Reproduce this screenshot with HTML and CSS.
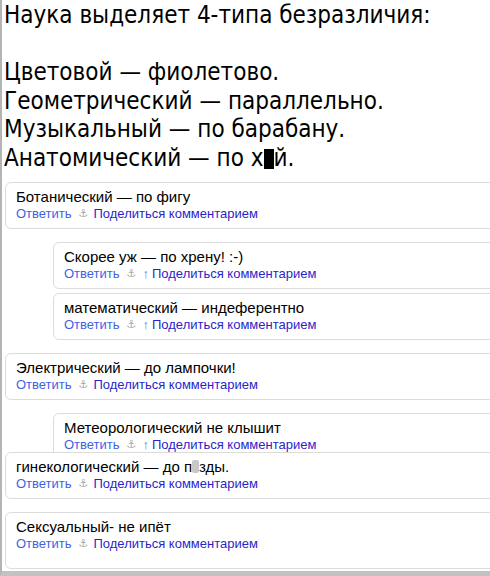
FILE: index.html
```html
<!DOCTYPE html>
<html>
<head>
	<meta charset="utf-8">
	<meta name="viewport" content="width=device-width, initial-scale=1">
	<title>Комментарии</title>
	<link rel="stylesheet" href="styles.css">
</head>
<body>
	<div class="frame">
		<div class="post">
			<p>Наука выделяет 4-типа безразличия:</p>
			<p>&nbsp;</p>
			<p>Цветовой — фиолетово.</p>
			<p>Геометрический — параллельно.</p>
			<p>Музыкальный — по барабану.</p>
			<p>Анатомический — по х<span class="censor">у</span>й.</p>
		</div>

		<div class="comments">
			<div class="comment">
				<div class="text">Ботанический — по фигу</div>
				<div class="links"><a class="reply">Ответить</a><span class="anchor">⚓</span><a class="share">Поделиться комментарием</a></div>
			</div>

			<div class="comment child gap">
				<div class="text">Скорее уж — по хрену! :-)</div>
				<div class="links"><a class="reply">Ответить</a><span class="anchor">⚓</span><span class="up">↑</span><a class="share">Поделиться комментарием</a></div>
			</div>
			<div class="comment child tight">
				<div class="text">математический — индеферентно</div>
				<div class="links"><a class="reply">Ответить</a><span class="anchor">⚓</span><span class="up">↑</span><a class="share">Поделиться комментарием</a></div>
			</div>

			<div class="comment gap">
				<div class="text">Электрический — до лампочки!</div>
				<div class="links"><a class="reply">Ответить</a><span class="anchor">⚓</span><a class="share">Поделиться комментарием</a></div>
			</div>

			<div class="comment child gap">
				<div class="text">Метеорологический не клышит</div>
				<div class="links"><a class="reply">Ответить</a><span class="anchor">⚓</span><span class="up">↑</span><a class="share">Поделиться комментарием</a></div>
			</div>
			<!-- этот блок наезжает на предыдущий -->
			<div class="comment over">
				<div class="text">гинекологический — до п<span class="blur">и</span>зды.</div>
				<div class="links"><a class="reply">Ответить</a><span class="anchor">⚓</span><a class="share">Поделиться комментарием</a></div>
			</div>

			<div class="comment gap last">
				<div class="text">Сексуальный- не ипёт</div>
				<div class="links"><a class="reply">Ответить</a><span class="anchor">⚓</span><a class="share">Поделиться комментарием</a></div>
			</div>
		</div>
	</div>
</body>
</html>
```

FILE: styles.css
```css
* {
	padding: 0;
	margin: 0;
	box-sizing: border-box;
}
body {overflow: hidden; background: #fff;}
.frame {
	height: 576px;
	border-left: 2px solid #b4b4b4;
	border-bottom: 5px solid #c2c2c2;
	overflow: hidden;
}

.post {
	font-family: "DejaVu Sans Condensed", "DejaVu Sans", sans-serif;
	font-size: 24px;
	line-height: 28.5px;
	color: #000;
	padding: 1px 0 0 2px;
}
.censor {
	display: inline-block;
	width: 10px;
	height: 20px;
	overflow: hidden;
	vertical-align: -3px;
	background: #000;
	color: transparent;
	line-height: 20px;
}

.comments {
	display: flex;
	flex-direction: column;
	padding: 10px 0 0 3px;
	font-family: "Liberation Sans", Arial, sans-serif;
}
.comment {
	position: relative;
	background: #fff;
	border: 1px solid #dcdcdc;
	border-radius: 6px;
	margin-right: -20px;
	padding: 5px 10px 6px;
}
.comment.child {margin-left: 48px;}
.comment.gap {margin-top: 13px;}
.comment.tight {margin-top: 4px;}
.comment.over {margin-top: -8px;}
.comment.last {padding-bottom: 16px;}

.text {font-size: 15px; line-height: 18px; color: #000;}
.blur {display: inline-block; width: 7px; color: transparent; background: #c8c8c8; border-radius: 2px; filter: blur(0.6px); line-height: 13px;}

.links {font-size: 13px; line-height: 16px; display: flex; align-items: center; white-space: nowrap;}
.reply {color: #3f62e3;}
.share {color: #2a1fc9;}
.anchor {color: #a8a8a8; font-size: 11px; font-family: "DejaVu Sans", sans-serif; margin: 0 5px 0 7px;}
.up {color: #4a6ae0; font-size: 13px; margin-right: 3px; margin-left: 1px;}
```
